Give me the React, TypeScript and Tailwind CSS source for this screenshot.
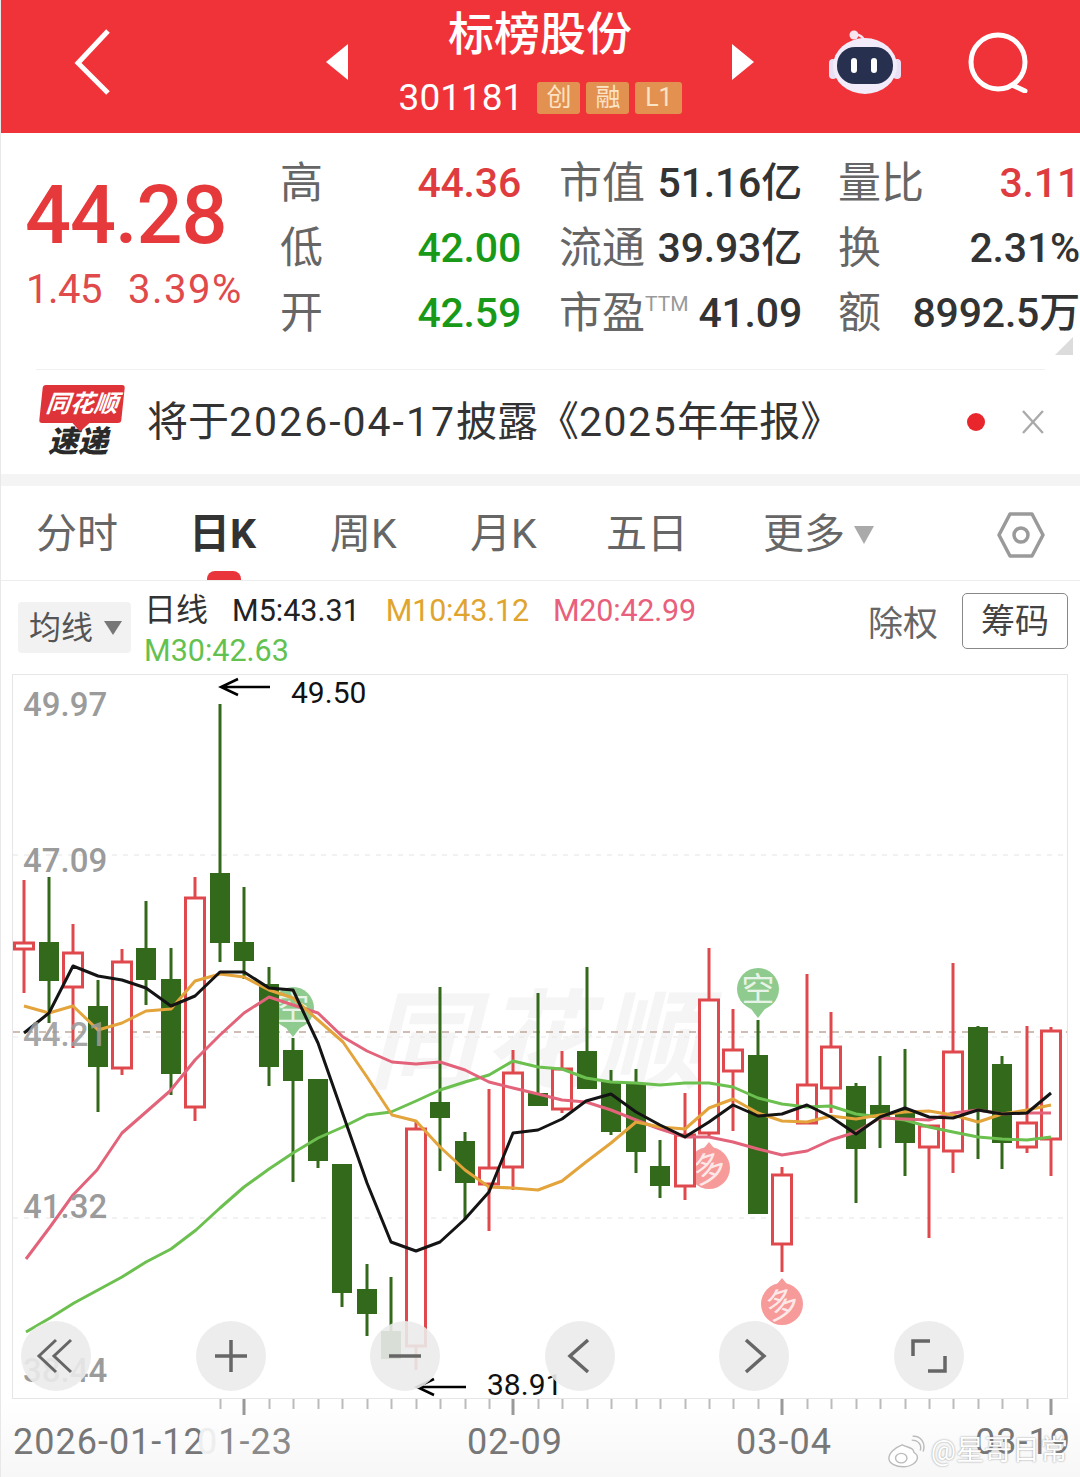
import React from "react";

const RED = "#df484d";
const GREEN = "#32691a";

// x index follows the day, values are page y of high, low, body top, body bottom
const candles: [number, number, number, number, number, "r" | "g"][] = [
  [24, 880, 993, 943, 949, "r"],
  [49, 877, 1023, 942, 981, "g"],
  [73, 924, 1048, 953, 987, "r"],
  [98, 980, 1112, 1006, 1067, "g"],
  [122, 949, 1075, 962, 1068, "r"],
  [146, 901, 1005, 948, 980, "g"],
  [171, 948, 1095, 979, 1074, "g"],
  [195, 877, 1121, 898, 1107, "r"],
  [220, 704, 962, 873, 943, "g"],
  [244, 887, 979, 942, 961, "g"],
  [269, 967, 1086, 984, 1067, "g"],
  [293, 1038, 1182, 1050, 1081, "g"],
  [318, 1079, 1168, 1079, 1161, "g"],
  [342, 1164, 1307, 1164, 1293, "g"],
  [367, 1264, 1336, 1289, 1314, "g"],
  [391, 1277, 1359, 1331, 1359, "g"],
  [416, 1122, 1370, 1129, 1346, "r"],
  [440, 987, 1171, 1102, 1118, "g"],
  [465, 1132, 1220, 1141, 1183, "g"],
  [489, 1089, 1231, 1168, 1184, "r"],
  [513, 1050, 1190, 1073, 1167, "r"],
  [538, 993, 1106, 1093, 1106, "g"],
  [562, 1051, 1113, 1069, 1109, "r"],
  [587, 967, 1089, 1051, 1089, "g"],
  [611, 1070, 1135, 1081, 1132, "g"],
  [636, 1069, 1173, 1083, 1152, "g"],
  [660, 1140, 1198, 1166, 1186, "g"],
  [685, 1093, 1200, 1135, 1186, "r"],
  [709, 948, 1137, 1000, 1133, "r"],
  [733, 1009, 1131, 1050, 1071, "r"],
  [758, 1020, 1214, 1055, 1214, "g"],
  [782, 1167, 1272, 1175, 1244, "r"],
  [807, 974, 1123, 1085, 1123, "r"],
  [831, 1012, 1113, 1047, 1088, "r"],
  [856, 1083, 1203, 1086, 1149, "g"],
  [880, 1056, 1148, 1105, 1118, "g"],
  [905, 1049, 1176, 1110, 1143, "g"],
  [929, 1126, 1238, 1126, 1147, "r"],
  [953, 963, 1173, 1052, 1151, "r"],
  [978, 1026, 1159, 1027, 1110, "g"],
  [1002, 1056, 1169, 1064, 1143, "g"],
  [1027, 1026, 1153, 1123, 1147, "r"],
  [1051, 1027, 1176, 1031, 1139, "r"],
];

const m5 =
  "24,1033 49,1013 73,966 98,976 122,980 146,988 171,1006 195,996 220,972 244,972 269,988 293,990 318,1043 346,1123 367,1183 391,1242 416,1251 440,1242 464,1220 489,1192 513,1133 538,1130 562,1119 586,1101 611,1094 636,1112 660,1125 685,1137 709,1122 733,1105 758,1116 782,1114 807,1105 831,1117 856,1134 880,1117 905,1108 929,1117 953,1118 978,1110 1002,1114 1027,1113 1051,1093";
const m10 =
  "24,1006 49,1013 73,1006 98,1030 122,1023 146,1011 171,1009 195,981 220,974 244,977 269,990 293,998 318,1020 343,1042 367,1077 392,1115 416,1121 440,1147 465,1170 489,1187 513,1188 538,1190 562,1181 586,1162 611,1143 636,1122 660,1127 685,1129 709,1108 733,1099 758,1113 782,1121 807,1122 831,1116 856,1119 880,1115 905,1112 929,1111 953,1115 978,1122 1002,1114 1027,1110 1051,1105";
const m20 =
  "26,1259 50,1227 73,1195 97,1170 122,1133 146,1112 170,1091 195,1060 220,1035 244,1013 269,997 293,1005 318,1013 343,1037 367,1051 392,1062 416,1064 440,1062 465,1070 489,1082 513,1088 538,1094 562,1100 586,1102 611,1110 636,1120 660,1129 685,1137 709,1137 733,1142 758,1149 782,1155 807,1151 831,1140 856,1132 880,1118 905,1119 929,1120 953,1113 978,1110 1002,1114 1027,1113 1051,1113";
const m30 =
  "26,1332 50,1318 74,1303 98,1290 122,1277 146,1262 171,1249 196,1230 220,1208 244,1187 269,1169 293,1153 318,1138 343,1127 367,1115 391,1112 416,1101 440,1090 465,1082 489,1075 513,1061 538,1067 562,1069 586,1078 611,1082 636,1083 660,1085 685,1083 709,1083 733,1087 758,1098 782,1104 807,1107 831,1106 856,1114 880,1117 905,1120 929,1127 953,1132 978,1137 1002,1139 1027,1140 1051,1137";

const tickXs = [
  220, 244, 269, 293, 318, 342, 367, 391, 416, 440, 465, 489, 513, 538, 562, 587, 611, 636, 660, 685, 709, 733, 758, 782,
  807, 831, 856, 880, 905, 929, 953, 978, 1002, 1027, 1051,
];
const bigTicks = [244, 513, 782, 1051];

const Bubble = ({ x, y, up, fill, label }: { x: number; y: number; up?: boolean; fill: string; label: string }) => {
  const tip = up ? y - 26 : y + 29;
  const side = up ? y - 14 : y + 16;
  return (
    <g>
      <circle cx={x} cy={y} r={21} fill={fill} />
      <polygon points={`${x - 10},${side} ${x + 10},${side} ${x},${tip}`} fill={fill} />
      <text
        x={x}
        y={y + 12}
        fontSize={33}
        textAnchor="middle"
        fill="#fff"
        fillOpacity={0.8}
        transform={up ? `rotate(-18 ${x} ${y})` : undefined}
      >
        {label}
      </text>
    </g>
  );
};

const Chart = () => (
  <svg viewBox="13 675 1054 723" className="block w-full h-full">
    <text x={368} y={1080} fontSize={108} fontWeight={700} fontStyle="italic" fill="#f5f5f5" letterSpacing={6}>
      同花顺
    </text>
    <line x1={13} x2={1067} y1={855} y2={855} stroke="#e4e4e4" strokeDasharray="5 6" />
    <line x1={13} x2={1067} y1={1037} y2={1037} stroke="#e8e8e8" strokeDasharray="5 6" />
    <line x1={13} x2={1067} y1={1218} y2={1218} stroke="#e4e4e4" strokeDasharray="5 6" />
    <line x1={13} x2={1067} y1={1032} y2={1032} stroke="#bda899" strokeWidth={1.5} strokeDasharray="7 6" />

    <Bubble x={293} y={1008} fill="#8fcb8e" label="空" />
    <Bubble x={758} y={989} fill="#8fcb8e" label="空" />
    <Bubble x={709} y={1168} up fill="#f79a9a" label="多" />
    <Bubble x={782} y={1304} up fill="#f79a9a" label="多" />

    {candles.map(([x, high, low, top, bottom, kind]) =>
      kind === "g" ? (
        <g key={x}>
          <line x1={x} x2={x} y1={high} y2={low} stroke={GREEN} strokeWidth={3} />
          <rect x={x - 10} y={top} width={20} height={bottom - top} fill={GREEN} />
        </g>
      ) : (
        <g key={x}>
          <line x1={x} x2={x} y1={high} y2={low} stroke={RED} strokeWidth={3} />
          <rect x={x - 9.5} y={top} width={19} height={bottom - top} fill="#fff" stroke={RED} strokeWidth={3} />
        </g>
      ),
    )}

    <polyline points={m30} fill="none" stroke="#6cc04f" strokeWidth={3} strokeLinejoin="round" />
    <polyline points={m20} fill="none" stroke="#e2637a" strokeWidth={3} strokeLinejoin="round" />
    <polyline points={m10} fill="none" stroke="#e3a43c" strokeWidth={3} strokeLinejoin="round" />
    <polyline points={m5} fill="none" stroke="#141414" strokeWidth={3} strokeLinejoin="round" />

    <path d="M270 687H221M238 679L221 687L238 695" fill="none" stroke="#000" strokeWidth={2.5} />
    <path d="M466 1387H417M434 1379L417 1387L434 1395" fill="none" stroke="#000" strokeWidth={2.5} />
  </svg>
);

const FloatButton = ({ children }: { children: React.ReactNode }) => (
  <div className="flex h-[70px] w-[70px] items-center justify-center rounded-full bg-[#ebebeb]/90">
    <svg viewBox="0 0 40 40" className="h-10 w-10" fill="none" stroke="#666" strokeWidth={3.5}>
      {children}
    </svg>
  </div>
);

const Stat = ({
  label,
  value,
  color,
  sup,
  className = "",
}: {
  label: string;
  value: string;
  color: string;
  sup?: string;
  className?: string;
}) => (
  <div className={`flex items-center justify-between ${className}`}>
    <span className="flex items-start text-[#666] text-[43px] leading-[64px]">
      {label}
      {sup && <span className="mt-[7px] text-[21px] leading-[32px] text-[#999]">{sup}</span>}
    </span>
    <span className="text-[41px] leading-[64px] font-medium tracking-[-0.2px] whitespace-nowrap" style={{ color }}>
      {value}
    </span>
  </div>
);

export default function App() {
  return (
    <div className="h-[1477px] w-[1080px] overflow-hidden bg-white border-l border-[#e8e8e8] font-[family-name:Roboto,'Noto_Sans_CJK_SC',sans-serif]">
      {/* Header */}
      <div className="flex h-[133px] items-center bg-[#f03339] -ml-px pb-[10px]">
        <svg viewBox="0 0 40 70" className="ml-[72px] h-[70px] w-10" fill="none" stroke="#fff" strokeWidth={5}>
          <polyline points="36,4 6,36 36,66" />
        </svg>
        <svg viewBox="0 0 22 36" className="ml-[214px] h-9 w-[22px]" fill="#fff">
          <polygon points="22,0 22,36 0,18" />
        </svg>
        <div className="flex w-[384px] flex-col items-center text-white">
          <span className="text-[46px] leading-[56px] font-medium">标榜股份</span>
          <div className="mt-[16px] flex items-center gap-[6px] pl-[1px]">
            <span className="mr-[8px] text-[37px] leading-[40px]">301181</span>
            <span className="flex h-8 w-[43px] items-center justify-center rounded-[3px] bg-[#e39150] text-[25px] text-[#fbe3c6]">创</span>
            <span className="flex h-8 w-[43px] items-center justify-center rounded-[3px] bg-[#e39150] text-[25px] text-[#fbe3c6]">融</span>
            <span className="flex h-8 w-[47px] items-center justify-center rounded-[3px] bg-[#e39150] text-[25px] text-[#fbe3c6]">L1</span>
          </div>
        </div>
        <svg viewBox="0 0 22 36" className="h-9 w-[22px]" fill="#fff">
          <polygon points="0,0 0,36 22,18" />
        </svg>
        <svg viewBox="0 0 72 66" className="ml-[75px] h-[66px] w-[72px]">
          <path d="M25 6C31 5 35 8 36 15" fill="none" stroke="#f4e4ee" strokeWidth={2.5} />
          <circle cx={25} cy={6} r={4.5} fill="#f7e4ee" />
          <rect x={0} y={30} width={8} height={20} rx={4} fill="#e9e0f5" />
          <rect x={64} y={30} width={8} height={20} rx={4} fill="#e9e0f5" />
          <ellipse cx={36} cy={37} rx={32} ry={28} fill="#f2ecfa" />
          <rect x={8} y={18} width={56} height={37} rx={18} fill="#27304f" />
          <rect x={22} y={29} width={6} height={15} rx={3} fill="#fff" />
          <rect x={42} y={29} width={6} height={15} rx={3} fill="#fff" />
        </svg>
        <svg viewBox="0 0 62 62" className="ml-[66px] h-[62px] w-[62px]" fill="none" stroke="#fff" strokeWidth={5}>
          <circle cx={31} cy={31} r={27} />
          <path d="M45 54L58 60" strokeLinecap="round" />
        </svg>
      </div>

      {/* Quote */}
      <div className="relative flex h-[236px] items-start pt-[18px]">
        <div className="ml-[24px] flex w-[255px] flex-col pt-[21px]">
          <span className="text-[81px] leading-[88px] font-medium tracking-[-1px] text-[#e5393c]">44.28</span>
          <div className="mt-[6px] flex gap-[26px] pl-[1px] text-[40px] leading-[48px] text-[#e04a4a]">
            <span className="tracking-[-0.5px]">1.45</span>
            <span className="tracking-[1.5px]">3.39%</span>
          </div>
        </div>
        <div className="grid grid-cols-[279px_279px_242px] gap-y-[1px]">
          <Stat className="pr-[38px]" label="高" value="44.36" color="#df3c40" />
          <Stat className="pr-[36px]" label="市值" value="51.16亿" color="#333" />
          <Stat label="量比" value="3.11" color="#df3c40" />
          <Stat className="pr-[38px]" label="低" value="42.00" color="#189a18" />
          <Stat className="pr-[36px]" label="流通" value="39.93亿" color="#333" />
          <Stat label="换" value="2.31%" color="#333" />
          <Stat className="pr-[38px]" label="开" value="42.59" color="#189a18" />
          <Stat className="pr-[36px]" label="市盈" sup="TTM" value="41.09" color="#333" />
          <Stat label="额" value="8992.5万" color="#333" />
        </div>
        <svg viewBox="0 0 18 18" className="absolute right-[7px] bottom-[14px] h-[18px] w-[18px]" fill="#dcdcdc">
          <polygon points="18,0 18,18 0,18" />
        </svg>
      </div>

      {/* Notice */}
      <div className="mx-[35px] h-[105px] border-t border-[#f0f0f0]">
        <div className="flex h-[104px] items-center">
          <div className="flex w-[111px] shrink-0 flex-col items-start pl-[5px]">
            <div className="relative flex h-[38px] w-[82px] -skew-x-6 items-center justify-center rounded-[3px] bg-[#de3338]">
              <span className="text-[24px] leading-none font-bold italic text-white">同花顺</span>
              <span className="absolute -bottom-[6px] left-[36px] h-[12px] w-[12px] rotate-45 bg-[#de3338]" />
            </div>
            <span className="mt-[2px] pl-[7px] text-[30px] leading-[34px] font-black italic text-[#2a2a2a]">速递</span>
          </div>
          <span className="text-[41px] leading-[50px] whitespace-nowrap text-[#333]">
            将于<span className="tracking-[2px]">2026-04-17</span>披露《<span className="tracking-[1.5px]">2025</span>年年报》
          </span>
          <span className="ml-[126px] h-[18px] w-[18px] rounded-full bg-[#e8262c]" />
          <svg viewBox="0 0 24 24" className="ml-[36px] h-[24px] w-[24px]" fill="none" stroke="#aaa" strokeWidth={2.4}>
            <path d="M2 1L22 23M22 1L2 23" />
          </svg>
        </div>
      </div>
      <div className="h-3 -ml-px bg-[#f4f4f4]" />

      {/* Tabs */}
      <div className="relative flex h-[95px] items-center border-b border-[#ededed] pt-[3px] pl-[35px] text-[41px] text-[#666]">
        <span className="w-[153px]">分时</span>
        <span className="w-[141px] font-bold text-[#333]">日K</span>
        <span className="w-[140px]">周K</span>
        <span className="w-[136px]">月K</span>
        <span className="w-[157px]">五日</span>
        <span>更多</span>
        <svg viewBox="0 0 20 18" className="ml-[9px] h-[18px] w-5" fill="#aaa">
          <polygon points="0,0 20,0 10,18" />
        </svg>
        <svg viewBox="0 0 50 48" className="ml-[122px] h-12 w-[50px]" fill="none" stroke="#9a9a9a" strokeWidth={3.5}>
          <path d="M14 3H36L47 24L36 45H14L3 24Z" strokeLinejoin="round" />
          <circle cx={25} cy={24} r={7} />
        </svg>
        <span className="absolute bottom-0 left-[206px] h-[9px] w-[34px] rounded-t-[8px] bg-[#e8343a]" />
      </div>

      {/* Legend */}
      <div className="flex h-[93px] pl-[17px] pr-[12px]">
        <div className="mt-[21px] flex h-[51px] w-[113px] items-center rounded-[4px] bg-[#f2f2f2] pl-[11px] text-[32px] text-[#555]">
          均线
          <svg viewBox="0 0 18 14" className="ml-[11px] h-[14px] w-[18px]" fill="#777">
            <polygon points="0,0 18,0 9,14" />
          </svg>
        </div>
        <div className="ml-[13px] flex w-[600px] flex-wrap content-start items-baseline pt-[9px] text-[30.5px] leading-[40px]">
          <span className="mr-6 text-[32px] text-[#333]">日线</span>
          <span className="mr-[26px] text-[#222]">M5:43.31</span>
          <span className="mr-[24px] tracking-[-0.2px] text-[#e0a52f]">M10:43.12</span>
          <span className="tracking-[-0.2px] text-[#e8607c]">M20:42.99</span>
          <span className="w-full text-[#63c24f]">M30:42.63</span>
        </div>
        <div className="ml-auto flex h-fit items-start pt-3">
          <span className="mt-[6px] text-[35px] text-[#666]">除权</span>
          <span className="ml-6 flex h-[56px] w-[106px] items-center justify-center rounded-[5px] border border-[#888] text-[34px] text-[#444]">
            筹码
          </span>
        </div>
      </div>

      {/* Chart */}
      <div className="relative ml-[11px] h-[725px] w-[1056px] border border-[#e6e6e6]">
        <Chart />
        <span className="absolute left-[10px] top-[8px] text-[33px] leading-[44px] font-medium text-[#9b9b9b]">49.97</span>
        <span className="absolute left-[10px] top-[164px] text-[33px] leading-[44px] font-medium text-[#9b9b9b]">47.09</span>
        <span className="absolute left-[10px] top-[338px] text-[33px] leading-[44px] font-medium text-[#9b9b9b]/90">44.21</span>
        <span className="absolute left-[10px] top-[510px] text-[33px] leading-[44px] font-medium text-[#9b9b9b]">41.32</span>
        <span className="absolute left-[10px] top-[674px] text-[33px] leading-[44px] font-medium text-[#9b9b9b]">38.44</span>
        <span className="absolute left-[278px] top-0 text-[30px] leading-[36px] text-[#111]">49.50</span>
        <span className="absolute left-[474px] top-[692px] text-[30px] leading-[36px] text-[#111]">38.91</span>
        <div className="absolute left-[8px] top-[646px] flex gap-[104.6px]">
          <FloatButton>
            <path d="M20 4L3 20L20 36M35 4L18 20L35 36" strokeWidth={3} />
          </FloatButton>
          <FloatButton>
            <path d="M4 20H36M20 4V36" />
          </FloatButton>
          <FloatButton>
            <path d="M4 20H36" />
          </FloatButton>
          <FloatButton>
            <path d="M28 4L10 20L28 36" />
          </FloatButton>
          <FloatButton>
            <path d="M12 4L30 20L12 36" />
          </FloatButton>
          <FloatButton>
            <path d="M21 5H4V20M19 35H36V20" />
          </FloatButton>
        </div>
      </div>

      {/* Date axis */}
      <div className="relative h-[79px] bg-gradient-to-b from-white to-[#f7f7f7] -ml-px">
        <svg viewBox="0 0 1080 20" className="block h-5 w-full">
          {tickXs.map((x) =>
            bigTicks.includes(x) ? (
              <rect key={x} x={x - 1.5} y={0} width={3} height={16} fill="#999" />
            ) : (
              <rect key={x} x={x - 0.5} y={0} width={2} height={10} fill="#bbb" />
            ),
          )}
        </svg>
        <div className="flex pl-[13px] pt-[1px] text-[36px] leading-[44px] tracking-[1px] text-[#777] whitespace-nowrap">
          <span className="w-[184px]">2026-01-12</span>
          <span className="w-[270px] text-[#8a8a8a]">
            <span className="text-[#eee]">0</span>1-23
          </span>
          <span className="w-[269px]">02-09</span>
          <span className="w-[239px]">03-04</span>
          <span>03-19</span>
        </div>
        <div className="absolute right-[12px] top-[34px] flex items-center gap-[6px]">
          <svg viewBox="0 0 40 34" className="h-[33px] w-[38px]" fill="#fff" stroke="#bbb" strokeWidth={1.5}>
            <path d="M16 10C8 13 2 19 2 24C2 30 10 33 17 33C26 33 32 28 32 23C32 19 28 19 28 17C28 13 22 13 16 10Z" />
            <ellipse cx={15} cy={24} rx={6} ry={5} fill="none" />
            <path d="M26 5C33 5 37 10 35 16M27 1C36 0 41 9 38 17" fill="none" />
          </svg>
          <span className="text-[28px] leading-[36px] text-white [text-shadow:0_0_2px_#888]">@星哥日常</span>
        </div>
      </div>
    </div>
  );
}
